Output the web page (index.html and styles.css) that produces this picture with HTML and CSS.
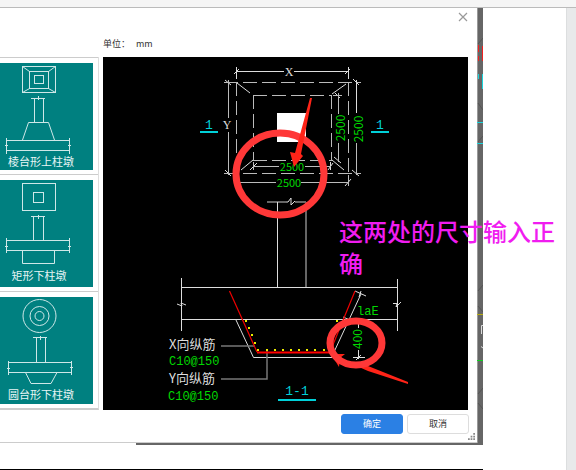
FILE: index.html
```html
<!DOCTYPE html>
<html lang="zh-CN">
<head>
<meta charset="utf-8">
<meta name="viewport" content="width=device-width, initial-scale=1">
<title>柱墩</title>
<link rel="stylesheet" href="styles.css">
</head>
<body>
<div class="topbar"></div>
<div class="workspace">
  <main class="stage">
    <div class="backdrop">
      <section class="dialog">
        <header class="dialog-head">
          <p class="unit"><span>单位：</span><span>mm</span></p>
          <button class="close" type="button" aria-label="关闭">
            <svg viewBox="0 0 10 10" width="10" height="10"><path d="M1 1L9 9M9 1L1 9" stroke="#999" stroke-width="1.2"/></svg>
          </button>
        </header>
        <div class="dialog-body">
          <ul class="shapes">
            <li>
              <svg class="thumb" viewBox="0 0 93 107">
                <rect x="22.5" y="3.5" width="33" height="26"/><rect x="29.5" y="8.5" width="19" height="17"/><rect x="34.5" y="12.5" width="9" height="8"/>
                <path d="M22.5 3.5L29.5 8.5M55.5 3.5L48.5 8.5M22.5 29.5L29.5 25.5M55.5 29.5L48.5 25.5M31 35.5H45M38.5 33V37M34.5 35.5V59.5M43.5 35.5V59.5M22.5 77L28.5 59.5H48.5L54.5 77M6 77.5H70M6 87.5H70M6.5 75V91M69.5 75V91M5 82.5H8M68 82.5H71"/>
                <text x="41" y="103">棱台形上柱墩</text>
              </svg>
            </li>
            <li>
              <svg class="thumb" viewBox="0 0 93 107">
                <rect x="22.5" y="3.5" width="33" height="27"/><rect x="33.5" y="12.5" width="10" height="10"/>
                <path d="M31 36.5H45M38.5 35V39M33.5 36.5V60M43.5 36.5V60M6 60.5H70M6 70.5H70M6.5 58V73M69.5 58V73M5 66.5H8M68 66.5H71M22.5 70.5V83.5H54.5V70.5"/>
                <text x="39" y="100">矩形下柱墩</text>
              </svg>
            </li>
            <li>
              <svg class="thumb" viewBox="0 0 93 107">
                <circle cx="39.5" cy="19" r="16.5"/><circle cx="39.5" cy="19" r="9.5"/><circle cx="39.5" cy="19" r="4.5"/>
                <path d="M33 40.5H47M40.5 39V43M36.5 40.5V65M45.5 40.5V65M8 65.5H72M8 75.5H72M8.5 64V78M71.5 64V78M7 71.5H10M70 70.5H73M25.5 75.5L31 86.5H51L57 75.5"/>
                <text x="41" y="102">圆台形下柱墩</text>
              </svg>
            </li>
          </ul>
          <figure class="drawing">
            <svg class="plan" viewBox="103 57 365 353">
              <rect x="103" y="57" width="365" height="353" fill="#000"/>
              <g class="line">
                <path d="M236 71.5H284M294 71.5H349M236.5 67V79M348.5 67V79M234 74L239 69M345 74L350 69"/>
                <path d="M356.5 80V113M225 80L231 85M225 170L231 176"/>
                <path d="M335 93L340 98M334 157L341 163M353 79L359 85M352 170L359 176"/>
                <path d="M250 170L257 163M328 170L333 163M345 186L351 179M330.5 162V170"/>
                <path d="M237 83L250 93M346 84L332 94M241 170L253 160M332 160L344 170"/>
              </g>
              <g class="line soft">
                <path d="M228.5 80V118M228.5 132V175M338.5 93V114M338.5 143V162M356.5 143V175M333 95.5H342"/>
                <path d="M253 166.5H279M305 166.5H331M236 182.5H276M301 182.5H349M253.5 162V170M348.5 175V186"/>
                <path class="dash" d="M224 82.5H361M224 173.5H361M236.5 82V173M348.5 82V173M253 95.5H332M253 160.5H332M253.5 95V160M331.5 95V160"/>
              </g>
              <rect x="277" y="113" width="29" height="29" fill="#fff"/>
              <g class="line">
                <path class="dim" d="M306 202V287M267 202H286M295 202H306"/>
                <path d="M286 202H288L291 198V205L295 201M277.5 202V287"/>
                <path d="M181 287.5H398M181 319.5H398M181.5 278V331M397.5 279V331M177 304L182 306L181 303L186 305M393 303.5H397L396 307L401 302"/>
                <path d="M236 320L253.5 357.5H332L334 352M361 294L334 352M355 291L366 296M361 291L359 297M350 320L343 317"/>
                <path d="M358.5 319V328M358.5 350V359M353 357.5H365M356 360L361 355"/>
              </g>
              <path d="M221 346H255M221 379H267V350" fill="none" stroke="#777" stroke-width="1.5"/>
              <path d="M229.5 291L257 352M330 352L355 291" fill="none" stroke="#e00" stroke-width="1.2"/>
              <path d="M257 352.5H331" stroke="#f00" stroke-width="2"/>
              <path class="bars" d="M258 350h0M267 350h0M275 350h0M283 350h0M291 350h0M299 350h0M307 350h0M315 350h0M324 350h0M246 321h0M249 328h0M252 335h0M255 343h0M337 321h0"/>
              <g class="section">
                <path d="M200 132H218M371 132H389M278 400H316"/>
                <text x="209" y="129">1</text><text x="380" y="129">1</text><text x="297" y="395">1-1</text>
              </g>
              <g class="note">
                <text class="mid" x="289" y="76">X</text><text class="mid" x="227" y="129">Y</text>
                <text class="cjk" x="169" y="349">X向纵筋</text><text class="cjk" x="169" y="383">Y向纵筋</text>
              </g>
              <g class="size">
                <text x="169" y="365">C10@150</text><text x="168" y="400">C10@150</text><text x="357" y="315">laE</text>
                <text class="num" x="292" y="171">2500</text><text class="num" x="289" y="187">2500</text>
                <text class="num tall" transform="translate(345 128) rotate(-90)">2500</text>
                <text class="num tall" transform="translate(363 129) rotate(-90)">2500</text>
                <text class="num tall" transform="translate(362 339) rotate(-90)">400</text>
              </g>
              <g class="mark">
                <path d="M331 354L345 354L340 358L339 367Z"/>
                <path d="M352 364L368 366L408 382V384L368 371Z"/>
                <ellipse cx="280" cy="174" rx="44" ry="41"/>
                <ellipse cx="356" cy="343" rx="26" ry="22"/>
                <path d="M310 98H312L301 154L303 156L294 167L290 152L295 153Z"/>
              </g>
            </svg>
            <figcaption class="remark">这两处的尺寸输入正确</figcaption>
          </figure>
        </div>
        <footer class="dialog-foot">
          <button class="btn primary" type="button">确定</button>
          <button class="btn" type="button">取消</button>
          <svg class="grip" viewBox="0 0 8 8"><path d="M6 0h2v2h-2zM3 3h2v2h-2zM6 3h2v2h-2zM0 6h2v2h-2zM3 6h2v2h-2zM6 6h2v2h-2z"/></svg>
        </footer>
      </section>
      <svg class="strip" viewBox="0 0 6 435" preserveAspectRatio="none">
        <path d="M.5 0V435" stroke="#999"/>
        <path d="M1 36L6 30M1 95L6 102M1 134L6 128M1 283L6 277M1 298L6 304M1 386L6 380M1 395L6 401" stroke="#555"/>
        <path d="M1.5 37V44M1.5 48V53M5.5 38V53" stroke="#f02020"/>
        <path d="M1.5 66V71M5.5 66V81M0 114.5H6M0 135.5H6" stroke="#19d5dc"/>
        <path d="M0 306.5H6" stroke="#b5aa10"/><path d="M0 352.5H6" stroke="#1c2"/>
        <path d="M4.5 326V317.5H6M4 338.5L6 340" stroke="#ddd" fill="none"/>
      </svg>
    </div>
    <div class="canvas-end"></div>
  </main>
  <aside class="rail"></aside>
</div>
</body>
</html>
```
FILE: styles.css
```css
* { box-sizing: border-box; }

body {
  margin: 0;
  min-height: 100vh;
  display: flex;
  flex-direction: column;
  background: #fff;
  color: #333;
  font: 9px/12px "Noto Sans CJK SC", sans-serif;
}

.topbar {
  height: 8px;
  background: #f5f5f5;
  border-bottom: 1px solid #bbb;
}

.workspace {
  flex: 1;
  display: grid;
  grid-template-columns: 1fr 10px;
}

.stage {
  display: flex;
  flex-direction: column;
  justify-content: space-between;
  margin-right: 83px;
}

.backdrop {
  display: grid;
  grid-template-columns: 1fr 6px;
  padding-bottom: 2px;
  background: linear-gradient(90deg, #fff 136px, #666 136px);
}

.strip {
  width: 6px;
  height: 100%;
}

.canvas-end { border-bottom: 1px solid #000; }

.rail {
  background: #e8e9ea;
  border-left: 1px solid #dcdedf;
}

.dialog {
  background: #fff;
  border-bottom: 1px solid #ccc;
}

.dialog-head {
  display: flex;
  justify-content: space-between;
  align-items: flex-start;
  height: 49px;
  padding: 4px 9px 0 103px;
}

.unit {
  display: flex;
  gap: 6px;
  margin: 0;
  padding-top: 26px;
}

.close {
  display: flex;
  padding: 0;
  border: 0;
  background: none;
}

.dialog-body {
  display: flex;
  align-items: flex-start;
  gap: 4px;
  padding-right: 9px;
}

.shapes {
  flex: none;
  margin: 0;
  padding: 0;
  list-style: none;
  border-right: 1px solid #ddd;
  border-bottom: 2px solid #ccc;
}

.shapes li {
  padding: 5px 5px 4px 0;
  border-top: 1px solid #ccc;
}

.thumb {
  display: block;
  width: 93px;
  height: 107px;
  background: #008080;
  fill: none;
  stroke: #cfe8e8;
}

.thumb text {
  fill: #e8f5f5;
  stroke: none;
  font-size: 11px;
  text-anchor: middle;
}

.drawing {
  position: relative;
  flex: 1;
  margin: 0;
}

.plan {
  display: block;
  width: 100%;
  height: auto;
}

.line {
  fill: none;
  stroke: #ddd;
}

.soft { stroke: #bbb; }

.line .dash { stroke-dasharray: 14 5; }

.line .dim {
  stroke: #666;
  stroke-width: 2;
}

.bars {
  stroke: #ee0;
  stroke-width: 2;
  stroke-linecap: square;
}

.section {
  fill: #00d0d8;
  font: 13px "Liberation Mono", monospace;
  text-anchor: middle;
}

.section path {
  stroke: #00d0d8;
  stroke-width: 2;
}

.note {
  fill: #ddd;
  font: 12px "Liberation Serif", serif;
}

.note .mid { text-anchor: middle; }

.note .cjk { font: 13px "Noto Sans CJK SC", sans-serif; }

.size {
  fill: #00d800;
  font: 12px "Liberation Mono", monospace;
}

.size .num {
  font: 11px "Noto Sans CJK SC", sans-serif;
  text-anchor: middle;
}

.size .tall { font-size: 12px; }

.mark ellipse {
  fill: none;
  stroke: #ff3838;
  stroke-width: 7;
}

.mark path { fill: #ff2418; }

.remark {
  position: absolute;
  top: 158px;
  left: 236px;
  width: 220px;
  color: #f01cf0;
  font-size: 24px;
  font-weight: 500;
  line-height: 32px;
}

.dialog-foot {
  position: relative;
  display: flex;
  justify-content: flex-end;
  gap: 4px;
  padding: 4px 8px 8px;
}

.btn {
  width: 62px;
  height: 20px;
  padding: 0;
  border: 1px solid #ddd;
  border-radius: 3px;
  background: #fff;
  color: #333;
  font: inherit;
}

.btn.primary {
  border-color: #2b80e4;
  background: #2b80e4;
  color: #fff;
}

.grip {
  position: absolute;
  right: 2px;
  bottom: 2px;
  width: 7px;
  height: 7px;
  fill: #888;
}
```
